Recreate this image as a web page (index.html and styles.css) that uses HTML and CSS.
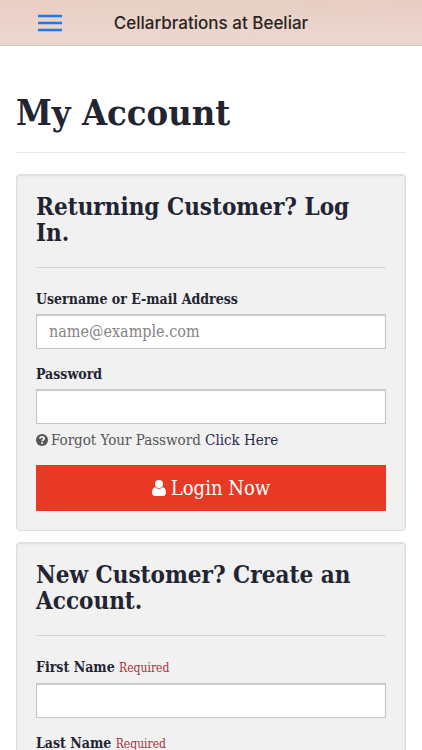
FILE: index.html
```html
<!DOCTYPE html>
<html lang="en">
<head>
    <meta charset="UTF-8">
    <meta name="viewport" content="width=device-width, initial-scale=1.0">
    <title>My Account - Cellarbrations at Beeliar</title>
    <link rel="stylesheet" href="styles.css">
</head>
<body>
    <!-- Top Bar -->
    <header class="navbar">
        <button class="menu-button" type="button" aria-label="Menu">
            <svg class="menu-icon" viewBox="0 0 24 18" aria-hidden="true">
                <path d="M0 2h24M0 9h24M0 16h24" stroke="#2377e0" stroke-width="2.4" fill="none"/>
            </svg>
        </button>
        <span class="navbar-title">Cellarbrations at Beeliar</span>
    </header>

    <main class="content">
        <h1 class="page-title">My Account</h1>

        <!-- Login Form -->
        <form class="well">
            <h2 class="well-title">Returning Customer? Log In.</h2>
            <div class="form-group">
                <label for="username">Username or E-mail Address</label>
                <input class="form-control" type="text" id="username" placeholder="name@example.com">
            </div>
            <div class="form-group">
                <label for="password">Password</label>
                <input class="form-control" type="password" id="password">
                <p class="help-text">
                    <svg class="help-icon" viewBox="0 0 24 24" aria-hidden="true">
                        <circle cx="12" cy="12" r="12" fill="#555"/>
                        <path d="M7.6 9.4C8.2 6.8 9.8 5.8 12 5.8c2.4 0 4.2 1.3 4.2 3.3 0 2.9-3.9 2.9-3.9 5.5" fill="none" stroke="#f1f1f1" stroke-width="3.6"/>
                        <path d="M10.5 16.4h3.6v3.6h-3.6z" fill="#f1f1f1"/>
                    </svg>
                    <span>Forgot Your Password <a href="#">Click Here</a></span>
                </p>
            </div>
            <button class="login-button" type="submit">
                <svg class="user-icon" viewBox="0 0 14 16" aria-hidden="true">
                    <circle cx="7" cy="4" r="4" fill="#fff"/>
                    <path d="M3.5 7.3C1 7.5 0 9.8 0 12.8C0 14.8 1.2 16 3 16H11C12.8 16 14 14.8 14 12.8C14 9.8 13 7.5 10.5 7.3C9.5 8.3 8.3 8.8 7 8.8C5.7 8.8 4.5 8.3 3.5 7.3Z" fill="#fff"/>
                </svg>
                Login Now
            </button>
        </form>

        <!-- Register Form -->
        <form class="well">
            <h2 class="well-title">New Customer? Create an Account.</h2>
            <div class="form-group">
                <label for="firstName">First Name <small>Required</small></label>
                <input class="form-control" type="text" id="firstName">
            </div>
            <div class="form-group">
                <label for="lastName">Last Name <small>Required</small></label>
                <input class="form-control" type="text" id="lastName">
            </div>
        </form>
    </main>
</body>
</html>
```
FILE: styles.css
```css
/* Basic styles for layout */
* {
    box-sizing: border-box;
}
body {
    margin: 0;
    font-family: "DejaVu Serif Condensed", "DejaVu Serif", serif;
    font-size: 14px;
    line-height: 20px;
    color: #555;
    background-color: #fff;
}
/* Top bar */
.navbar {
    display: grid;
    grid-template-columns: 100px 1fr 100px;
    align-items: center;
    height: 46px;
    border-bottom: 1px solid #d3c6c1;
    background: linear-gradient(rgba(236, 215, 207, 0), #ecd7cf), linear-gradient(90deg, #ebcfc6, #e6d0c3 45%, #e9cdc4);
}
.menu-button {
    justify-self: center;
    display: flex;
    padding: 0;
    border: none;
    background: none;
    cursor: pointer;
}
.menu-icon {
    width: 24px;
    height: 18px;
}
.navbar-title {
    font-family: Inter, sans-serif;
    font-size: 17px;
    font-weight: 500;
    color: #2b2321;
    text-align: center;
    white-space: nowrap;
}
/* Page content */
.content {
    padding: 46px 16px 20px;
}
.page-title {
    margin: 0 0 21px;
    padding-bottom: 20px;
    border-bottom: 1px solid #e8e8e8;
    font-size: 36px;
    line-height: 40px;
    color: #222431;
}
/* Panels */
.well {
    margin-bottom: 11px;
    padding: 19px;
    border: 1px solid #dcdcdc;
    border-radius: 4px;
    background-color: #f1f1f1;
    box-shadow: inset 0 1px 2px rgba(0, 0, 0, 0.08);
}
.well-title {
    margin: 0 0 21px;
    padding-bottom: 21px;
    border-bottom: 1px solid #d4d4d4;
    font-size: 24px;
    line-height: 26px;
    color: #222431;
}
/* Form fields */
.form-group {
    margin-bottom: 15px;
}
.form-group label {
    display: block;
    margin-bottom: 5px;
    font-weight: bold;
    color: #222431;
}
.form-group small {
    font-size: 12px;
    font-weight: normal;
    color: #a03438;
}
.form-control {
    display: block;
    width: 100%;
    height: 35px;
    padding: 0 12px;
    border: 1px solid #c4c4c4;
    border-radius: 0;
    background-color: #fff;
    box-shadow: inset 0 1px 1px #ccc;
    font-family: inherit;
    font-size: 16px;
    color: #555;
}
.form-control::placeholder {
    color: #858585;
}
.help-text {
    display: flex;
    align-items: center;
    gap: 3px;
    margin: 6px 0 0;
    font-size: 15px;
}
.help-icon {
    width: 12px;
    height: 12px;
}
.help-text a {
    color: #2c2b4b;
    text-decoration: none;
}
.login-button {
    display: flex;
    align-items: center;
    justify-content: center;
    gap: 5px;
    width: 100%;
    height: 46px;
    border: none;
    background-color: #e73923;
    color: #fff;
    font-family: inherit;
    font-size: 20px;
    cursor: pointer;
}
.user-icon {
    width: 14px;
    height: 16px;
}
```
